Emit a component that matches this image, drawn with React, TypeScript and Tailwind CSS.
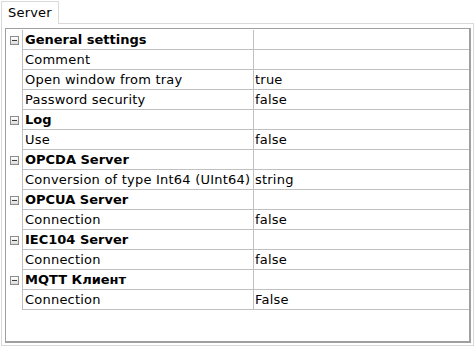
import React from 'react'

type Row = { name: string; value?: string; group?: boolean }

const rows: Row[] = [
  { name: 'General settings', group: true },
  { name: 'Comment', value: '' },
  { name: 'Open window from tray', value: 'true' },
  { name: 'Password security', value: 'false' },
  { name: 'Log', group: true },
  { name: 'Use', value: 'false' },
  { name: 'OPCDA Server', group: true },
  { name: 'Conversion of type Int64 (UInt64)', value: 'string' },
  { name: 'OPCUA Server', group: true },
  { name: 'Connection', value: 'false' },
  { name: 'IEC104 Server', group: true },
  { name: 'Connection', value: 'false' },
  { name: 'MQTT Клиент', group: true },
  { name: 'Connection', value: 'False' },
]

function CollapseBox() {
  return (
    <div className="w-[9px] h-[9px] border border-[#8c8c8c] bg-gradient-to-b from-white to-[#dcdcdc] flex items-center justify-center">
      <div className="w-[5px] h-px bg-[#3c3c3c]" />
    </div>
  )
}

export default function App() {
  return (
    <div
      className="w-[475px] h-[346px] bg-white text-black text-[13px] overflow-hidden"
      style={{ fontFamily: '"DejaVu Sans", Verdana, sans-serif' }}
    >
      <div className="pl-px pt-px flex">
        <div className="relative z-10 -mb-px w-[58px] h-[23px] border border-b-0 border-[#d9d9d9] bg-white pl-[6px] leading-[22px] tracking-[0.2px]">
          Server
        </div>
      </div>
      <div className="ml-px w-[473px] h-[323px] border border-[#d9d9d9] pl-[3px] pt-[4px]">
        <div className="w-[466px] h-[315px] border-t border-l border-r-2 border-b-2 border-[#a0a0a0] pt-px">
          {rows.map((r, i) => (
            <div key={i} className="flex h-[20px]">
              <div className="w-[16px] flex items-center justify-center">
                {r.group && <CollapseBox />}
              </div>
              <div className="flex flex-1 border-l border-b border-[#c0c0c0]">
                <div
                  className={`w-[230px] pl-[2px] leading-[19px] whitespace-nowrap ${
                    r.group ? 'font-bold' : 'tracking-[0.22px]'
                  }`}
                >
                  {r.name}
                </div>
                <div className="flex-1 border-l border-[#c0c0c0] pl-px leading-[19px] tracking-[0.22px]">
                  {r.value}
                </div>
              </div>
            </div>
          ))}
        </div>
      </div>
    </div>
  )
}
